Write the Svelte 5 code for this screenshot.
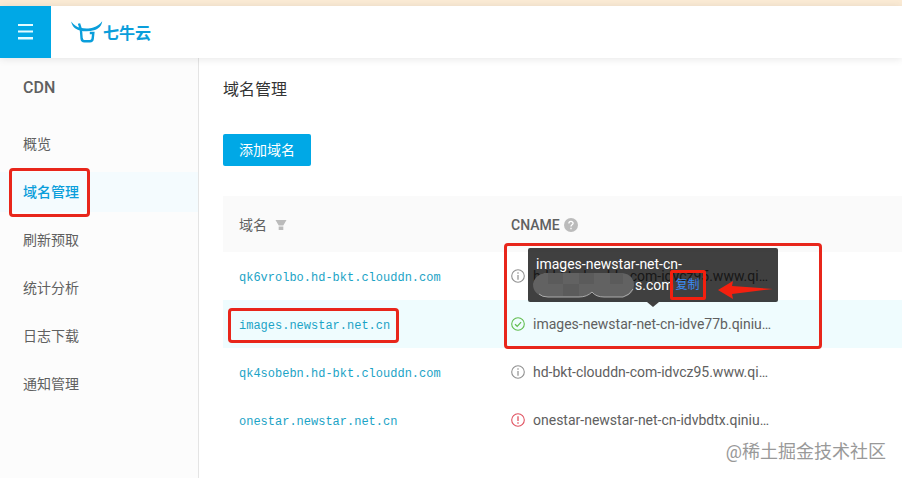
<script>
  const nav = ['概览', '域名管理', '刷新预取', '统计分析', '日志下载', '通知管理'];
  const current = '域名管理';
  const rows = [
    { domain: 'qk6vrolbo.hd-bkt.clouddn.com', cname: 'hd-bkt-clouddn-com-idvcz95.www.qi…', state: 'info' },
    { domain: 'images.newstar.net.cn', cname: 'images-newstar-net-cn-idve77b.qiniu…', state: 'ok' },
    { domain: 'qk4sobebn.hd-bkt.clouddn.com', cname: 'hd-bkt-clouddn-com-idvcz95.www.qi…', state: 'info' },
    { domain: 'onestar.newstar.net.cn', cname: 'onestar-newstar-net-cn-idvbdtx.qiniu…', state: 'error' }
  ];
</script>

<div class="page">
  <header>
    <button class="menu" aria-label="菜单">
      <svg width="16" height="16" viewBox="0 0 16 16" fill="#e4fbff">
        <path d="M0 0h15v2H0zM0 6.500h15v2H0zM0 13h15v2.500H0z" />
      </svg>
    </button>
    <a class="logo" href="#home">
      <svg width="32" height="22" viewBox="0 0 32 22" fill="none" stroke="#0a9edb">
        <path d="M.2.5C2.600 3.800 5.500 6 9.200 6.800c4.500 1 9.500.9 13-.3 3.800-1.200 7-3.200 9-6.200-.3 4.500-3.700 7.600-8.200 9-4.300 1.300-9.500 1.400-14 .2C4.400 8.200 1 5.500.2.500z" fill="#0a9edb" stroke="none" />
        <path d="M8 2.500l1.900 6 .7 9q.3 2.700 2.700 2.700h5.700q2.400 0 2.700-2.700l.6-5.500h-3.500" stroke-width="2.400" />
      </svg>
      <span>七牛云</span>
    </a>
  </header>

  <div class="body">
    <aside>
      <h2>CDN</h2>
      <nav>
        {#each nav as item}
          <a href="#nav" class:active={item === current}>{item}</a>
        {/each}
      </nav>
    </aside>

    <main>
      <h1>域名管理</h1>
      <button class="add">添加域名</button>

      <table>
        <thead>
          <tr>
            <th class="first">
              <div class="cell">
                域名
                <svg class="filter" width="12" height="12" viewBox="0 0 12 12" fill="#bbb">
                  <path d="M.5 1h11L8.300 6.500H3.700zM3.700 7.600h4.600V11H3.700z" />
                </svg>
              </div>
            </th>
            <th>
              <div class="cell tight">
                CNAME
                <svg width="14" height="14" viewBox="0 0 14 14">
                  <circle cx="7" cy="7" r="7" fill="#bbb" />
                  <path d="M4.900 5.500C4.900 2.700 9.100 2.800 9.100 5.300 9.100 6.800 7 6.800 7 8.400M7 9.700v1.500" fill="none" stroke="#fff" stroke-width="1.300" />
                </svg>
              </div>
            </th>
          </tr>
        </thead>
        <tbody>
          {#each rows as row}
            <tr class:selected={row.state === 'ok'}>
              <td class="first">
                <a class="domain" class:boxed={row.state === 'ok'} href="#domain">{row.domain}</a>
              </td>
              <td>
                <div class="cell {row.state}">
                  <svg width="14" height="14" viewBox="0 0 14 14" fill="none" stroke="currentColor">
                    <circle cx="7" cy="7" r="6.300" stroke-width="1.100" />
                    {#if row.state === 'ok'}
                      <path d="M4 7.200l2.200 2.100 3.900-4.200" stroke-width="1.200" />
                    {:else if row.state === 'error'}
                      <path d="M7 3.300v4.600M7 9.200v1.500" stroke-width="1.300" />
                    {:else}
                      <path d="M7 3.300v1.400M7 6v4.700" stroke-width="1.200" />
                    {/if}
                  </svg>
                  <span>{row.cname}</span>
                </div>
                {#if row.state === 'ok'}
                  <div class="frame"></div>
                  <div class="tooltip" role="tooltip">
                    <div>images-newstar-net-cn-</div>
                    <div class="line">
                      <svg class="mask" width="103" height="26" viewBox="0 0 103 26">
                        <path d="M12 1H91Q102 3 102 13T91 25H72Q64 25 60 20Q55 25 47 25H14Q1 23 1 12Q2 4 12 1z" fill="#626262" />
                        <path d="M16 1h15v11H16zM47 1h15v11H47zM78 1h13v11H78zM31 12h16v12H31z" fill="#5b5b5b" />
                        <path d="M7 22Q10 25 16 25H47Q55 25 60 20Q64 25 72 25H91Q98 23 101 17" fill="none" stroke="#aaa" />
                      </svg>
                      <span>s.com</span>
                      <button class="copy">复制</button>
                    </div>
                    <svg class="arrow" width="56" height="18" viewBox="0 0 56 18">
                      <path d="M0 9L15 0 14 5 55 8 14 13 15 18z" fill="#f4200f" />
                    </svg>
                  </div>
                {/if}
              </td>
            </tr>
          {/each}
        </tbody>
      </table>
    </main>
  </div>
  <div class="watermark">@稀土掘金技术社区</div>
</div>

<style>
  :global(body) {
    margin: 0;
  }
  .page {
    position: relative;
    display: flex;
    flex-direction: column;
    min-height: 100vh;
    box-sizing: border-box;
    border-top: 6px solid #fbebd5;
    background: #fff;
    color: #606060;
    font: 14px/20px Roboto, "Noto Sans CJK SC", sans-serif;
  }
  button {
    border: 0;
    padding: 0;
    font: inherit;
    cursor: pointer;
  }
  a {
    color: inherit;
    text-decoration: none;
  }
  header {
    position: relative;
    z-index: 1;
    display: flex;
    height: 52px;
    background: #fff;
    box-shadow: 0 1px 8px rgba(0, 0, 0, 0.1);
  }
  .menu {
    display: flex;
    align-items: center;
    justify-content: center;
    width: 51px;
    background: #00a8e6;
  }
  .logo {
    display: flex;
    align-items: center;
    padding-left: 20px;
    color: #0a9edb;
    font-size: 16px;
    font-weight: 700;
  }
  .logo span {
    padding-top: 4px;
  }
  .body {
    display: flex;
    flex: 1;
  }
  aside {
    flex: none;
    width: 198px;
    border-right: 1px solid #e4e4e4;
    background: #fcfcfc;
  }
  h2 {
    margin: 20px 0 26px 23px;
    font-size: 16px;
    line-height: 20px;
    font-weight: 500;
  }
  nav {
    display: flex;
    flex-direction: column;
    gap: 8px;
  }
  nav a {
    position: relative;
    padding: 10px 23px;
  }
  nav .active {
    background: #f4fbfe;
    color: #0a9edb;
    font-weight: 500;
  }
  nav .active::after,
  .frame,
  .boxed::after {
    content: "";
    position: absolute;
    box-sizing: border-box;
    border: 3px solid #e8261b;
    border-radius: 4px;
    pointer-events: none;
  }
  nav .active::after {
    left: 9px;
    top: -4px;
    width: 81px;
    height: 49px;
  }
  main {
    flex: 1;
    min-width: 0;
    padding: 20px 0 0 24px;
  }
  h1 {
    margin: 0 0 32px;
    color: #333;
    font-size: 16px;
    line-height: 24px;
    font-weight: 400;
  }
  .add {
    display: block;
    padding: 6px 16px;
    border-radius: 2px;
    background: #00a8e6;
    color: #fff;
  }
  table {
    width: 100%;
    margin-top: 30px;
    border-collapse: collapse;
    table-layout: fixed;
  }
  th,
  td {
    position: relative;
    height: 48px;
    padding: 0 16px;
    text-align: left;
    font-weight: 400;
  }
  th {
    height: 55px;
    padding-top: 1px;
    background: #fafafa;
    font-weight: 500;
  }
  th.first {
    font-weight: 400;
  }
  .first {
    width: 240px;
  }
  td.first {
    height: 47px;
    padding-top: 1px;
  }
  .selected {
    background: #effcfe;
  }
  .cell {
    display: flex;
    align-items: center;
    gap: 8px;
  }
  .tight {
    gap: 4px;
  }
  .domain {
    position: relative;
    color: #1ba3c6;
    font: 12px/20px "Liberation Mono", monospace;
  }
  .boxed::after {
    left: -11px;
    top: -11px;
    width: 171px;
    height: 35px;
  }
  .info svg {
    color: #909090;
  }
  .ok svg {
    color: #61bd4f;
  }
  .error svg {
    color: #e05260;
  }
  .frame {
    left: 9px;
    top: -57px;
    width: 318px;
    height: 106px;
  }
  .tooltip {
    position: absolute;
    left: 33px;
    top: -52px;
    box-sizing: border-box;
    width: 250px;
    height: 54px;
    padding: 6px 8px;
    border-radius: 2px;
    background: rgba(0, 0, 0, 0.75);
    color: #fff;
  }
  .tooltip::after {
    content: "";
    position: absolute;
    left: 119px;
    top: 54px;
    border: 6px solid transparent;
    border-top: 5px solid #404040;
    border-bottom: 0;
  }
  .line {
    display: flex;
    align-items: center;
    height: 22px;
  }
  .mask {
    flex: none;
    margin-left: -4px;
  }
  .copy {
    flex: none;
    box-sizing: border-box;
    width: 36px;
    height: 30px;
    margin-left: -4px;
    border: 3px solid #f4200f;
    border-radius: 2px;
    background: transparent;
    color: #3b8cf5;
    font-size: 12px;
  }
  .arrow {
    position: absolute;
    left: 190px;
    top: 33px;
  }
  .watermark {
    position: absolute;
    right: 16px;
    bottom: 14px;
    color: #999;
    font-size: 18px;
    line-height: 24px;
  }
</style>
